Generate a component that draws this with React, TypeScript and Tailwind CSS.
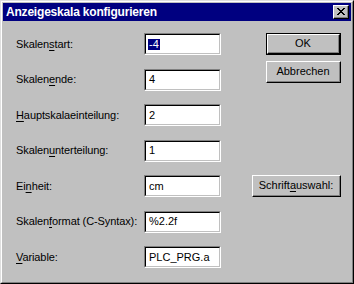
import React from "react";

const font = { fontFamily: '"Liberation Sans", Arial, sans-serif' };

function U({ children }: { children: React.ReactNode }) {
  return <span className="underline underline-offset-[2px] decoration-[1px]">{children}</span>;
}

function Field({ children }: { children: React.ReactNode }) {
  return (
    <div className="w-[77px] h-[22px] border-t border-l border-t-[#808080] border-l-[#808080] border-r border-b border-r-white border-b-white">
      <div className="w-full h-full border-t border-l border-t-black border-l-black border-r border-b border-r-[#c0c0c0] border-b-[#c0c0c0] bg-white flex items-center pl-[2px] text-[11px] leading-none text-black">
        {children}
      </div>
    </div>
  );
}

function Button({ children, width, isDefault }: { children: React.ReactNode; width: string; isDefault?: boolean }) {
  const inner = (
    <div className="w-full h-full border-t border-l border-t-white border-l-white border-r border-b border-r-black border-b-black">
      <div className="w-full h-full border-r border-b border-r-[#808080] border-b-[#808080] flex items-center justify-center text-[11px] leading-none text-black">
        {children}
      </div>
    </div>
  );
  if (isDefault) {
    return <div className={`${width} h-[22px] border border-black`}>{inner}</div>;
  }
  return <div className={`${width} h-[22px]`}>{inner}</div>;
}

function Row({ label, value }: { label: React.ReactNode; value: React.ReactNode }) {
  return (
    <div className="flex items-center h-[22px]">
      <div className="w-[128px] text-[11px] leading-none text-black tracking-[-0.1px]">{label}</div>
      <Field>{value}</Field>
    </div>
  );
}

export default function App() {
  return (
    <div style={font} className="w-[354px] h-[284px] border-t border-l border-t-[#dfdfdf] border-l-[#dfdfdf] border-r border-b border-r-black border-b-black">
      <div className="w-full h-full border-t border-l border-t-white border-l-white border-r border-b border-r-[#808080] border-b-[#808080] bg-[#c0c0c0] p-px flex flex-col">
        <div className="h-[18px] bg-[#000080] flex items-center justify-between pl-[3px] pr-[2px]">
          <span className="text-white font-bold text-[12px] tracking-[-0.2px] leading-none">Anzeigeskala konfigurieren</span>
          <div className="w-[16px] h-[14px] border-t border-l border-t-white border-l-white border-r border-b border-r-black border-b-black">
            <div className="w-full h-full border-r border-b border-r-[#808080] border-b-[#808080] bg-[#c0c0c0] flex items-center justify-center">
              <svg width="8" height="7" viewBox="0 0 8 7" shapeRendering="crispEdges">
                <path d="M0 0h2v1h-2zM6 0h2v1h-2zM1 1h2v1h-2zM5 1h2v1h-2zM2 2h4v1h-4zM3 3h2v1h-2zM2 4h4v1h-4zM1 5h2v1h-2zM5 5h2v1h-2zM0 6h2v1h-2zM6 6h2v1h-2z" fill="black" />
              </svg>
            </div>
          </div>
        </div>
        <div className="flex pl-[13px] pt-[12px]">
          <div className="flex flex-col gap-[13.5px]">
            <Row label={<>Skalen<U>s</U>tart:</>} value={<span className="bg-[#000080] text-white px-px">-4</span>} />
            <Row label={<>Skalen<U>e</U>nde:</>} value={<span className="px-px">4</span>} />
            <Row label={<><U>H</U>auptskalaeinteilung:</>} value={<span className="px-px">2</span>} />
            <Row label={<>Skalen<U>u</U>nterteilung:</>} value={<span className="px-px">1</span>} />
            <Row label={<>Ei<U>n</U>heit:</>} value={<span className="px-px">cm</span>} />
            <Row label={<>Skalen<U>f</U>ormat (C-Syntax):</>} value={<span className="px-px">%2.2f</span>} />
            <Row label={<><U>V</U>ariable:</>} value={<span className="px-px">PLC_PRG.a</span>} />
          </div>
          <div className="ml-[31px] w-[89px] flex flex-col items-end">
            <Button width="w-[75px]" isDefault>OK</Button>
            <div className="mt-[6px]">
              <Button width="w-[75px]">Abbrechen</Button>
            </div>
            <div className="mt-[92px]">
              <Button width="w-[89px]">Schrift<U>a</U>uswahl:</Button>
            </div>
          </div>
        </div>
      </div>
    </div>
  );
}
